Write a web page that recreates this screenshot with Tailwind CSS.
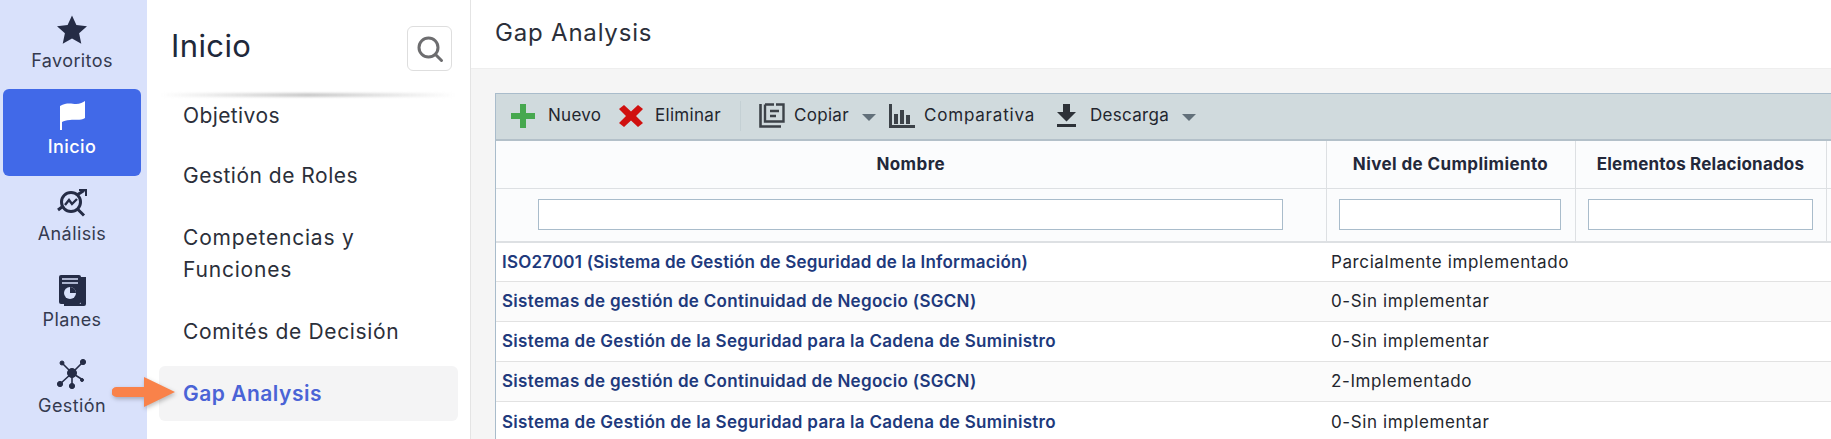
<!DOCTYPE html>
<html lang="es">
  <head>
    <meta charset="UTF-8" />
    <title>Gap Analysis</title>
    <script src="https://cdn.jsdelivr.net/npm/@tailwindcss/browser@4"></script>
  </head>
  <body class="w-[1831px] h-[439px] overflow-hidden bg-white font-['Inter',sans-serif] text-[#2b2f3a]">
    <div class="flex h-[439px]">
      <!-- barra de iconos -->
      <nav class="relative w-[147px] h-full shrink-0 bg-[#d9e1fb] pt-[14px] pr-[3px] flex flex-col items-center text-[18px] tracking-[0.4px] text-[#343a4f]">
        <a class="w-[138px] h-[75px] flex flex-col items-center">
          <svg class="w-[32px] h-[32px]" viewBox="0 0 32 32"><path fill="#252c46" d="M16 1.5l4.4 9.6 10.6 1.2-7.9 7 2.2 10.5L16 24.6 6.700 29.800l2.200-10.500-7.900-7 10.600-1.200z"/></svg>
          <span class="leading-[24px] mt-[3px]">Favoritos</span>
        </a>
        <a class="w-[138px] h-[87px] rounded-[6px] bg-[#4169e8] flex flex-col items-center pt-[11px] text-white font-medium">
          <svg class="w-[25px] h-[30px]" viewBox="0 0 25 30"><path fill="#fff" d="M0 6C7 2 12 4 16 4c4 0 7-2 9-3v17c-5 3-10 1-15 2-4 0-6 1-8 2v8H0z"/></svg>
          <span class="leading-[24px] mt-[5px]">Inicio</span>
        </a>
        <a class="w-[138px] h-[91px] flex flex-col items-center pt-[13px]">
          <svg class="w-[30px] h-[28px]" viewBox="0 0 30 28" fill="none" stroke="#252c46" stroke-width="3"><circle cx="14" cy="13" r="9.500"/><path d="M20.500 20l6.500 6.500M1 21l4-3M20 6l7-4.500"/><path stroke-width="2" d="M22 1h7v6"/><path stroke-width="2.400" d="M8 16l4-5 3 4 5-5"/></svg>
          <span class="leading-[24px] mt-[5px]">Análisis</span>
        </a>
        <a class="w-[138px] h-[92px] flex flex-col items-center pt-[7px]">
          <svg class="w-[30px] h-[32px]" viewBox="0 0 30 32"><path fill="#252c46" d="M24 3h5v27a2 2 0 0 1-2 2H7v-2h17z"/><rect x="2" y="1" width="22" height="29" rx="2" fill="#252c46"/><path stroke="#d9e1fb" stroke-width="1.500" d="M5 5h16M5 9h16"/><circle cx="13" cy="19" r="6" fill="#d9e1fb"/><path fill="#252c46" d="M13 19v-6a6 6 0 0 1 6 6z"/></svg>
          <span class="leading-[24px] mt-[2px]">Planes</span>
        </a>
        <a class="w-[138px] flex flex-col items-center">
          <svg class="w-[30px] h-[30px]" viewBox="0 0 30 30" fill="#252c46" stroke="#252c46"><path stroke-width="1.600" d="M5 4l10 10M26 3L15 14M15 14L3 25M15 14l11 7M15 14v13"/><circle cx="15" cy="14" r="4.500"/><circle cx="5" cy="4" r="2"/><circle cx="26" cy="3" r="2.600"/><circle cx="3" cy="25" r="2.600"/><circle cx="15" cy="27" r="2.600"/><circle cx="25" cy="21" r="1.500"/></svg>
          <span class="leading-[24px] mt-[5px]">Gestión</span>
        </a>
        <!-- flecha de anotación -->
        <svg class="absolute left-[112px] top-[377px] w-[63px] h-[30px] z-10 drop-shadow-[1px_2px_2px_rgba(0,0,0,0.25)]" viewBox="0 0 63 30"><path fill="#f9824a" d="M32 0l31 15-31 15V20H4.500a4.500 4.500 0 0 1 0-10H32z"/></svg>
      </nav>

      <!-- menu lateral -->
      <aside class="w-[324px] h-full shrink-0 bg-white border-r border-[#e4e4e4]">
        <div class="h-[96px] flex items-start justify-between pl-[24px] pr-[18px] pt-[26px] relative">
          <h1 class="text-[31px] tracking-[0.4px] leading-[40px] text-[#20283a]">Inicio</h1>
          <button class="w-[45px] h-[45px] border border-[#dedede] rounded-[6px] flex items-center justify-center">
            <svg class="w-[30px] h-[30px]" viewBox="0 0 30 30" fill="none" stroke="#6d6d6f" stroke-width="3" stroke-linecap="round"><circle cx="13.500" cy="13.500" r="9.500"/><path d="M20.500 20.500l6 6"/></svg>
          </button>
          <div class="absolute left-[13px] right-[14px] bottom-[-1px] h-[4px] bg-gradient-to-r from-transparent via-[#c9c9c9] to-transparent blur-[1px]"></div>
        </div>
        <ul class="text-[21px] text-[#2b2f3a]">
          <li class="pl-[36px] h-[40px] leading-[40px] tracking-[0.4px]">Objetivos</li>
          <li class="pl-[36px] mt-[20px] h-[40px] leading-[40px] tracking-[0.5px]">Gestión de Roles</li>
          <li class="pl-[36px] mt-[26px] h-[64px] leading-[32px] tracking-[0.8px]">Competencias y<br />Funciones</li>
          <li class="pl-[36px] mt-[26px] h-[40px] leading-[40px] tracking-[0.65px]">Comités de Decisión</li>
          <li class="ml-[12px] mt-[14px] w-[299px] h-[55px] rounded-[6px] bg-[#f4f4f5] pl-[24px] flex items-center font-semibold tracking-[0.5px] text-[#4a63d6]">Gap Analysis</li>
        </ul>
      </aside>

      <!-- contenido -->
      <main class="flex-1 min-w-0 h-full bg-[#f5f5f5] overflow-hidden">
        <header class="h-[69px] bg-white flex items-center pb-[2px] pl-[24px] text-[24px] tracking-[0.8px] text-[#2b2f3a] border-b border-[#eeeeee]">Gap Analysis</header>
        <section class="ml-[24px] mt-[24px] w-[1400px] border-l border-t border-[#a9bccb] bg-white">
          <div class="h-[47px] bg-[#d0dadd] border-b-2 border-[#b3c0c9] flex items-center pb-[1px] pl-[15px] text-[17px] tracking-[0.3px] text-[#23262e]">
            <svg class="w-[24px] h-[24px] shrink-0" viewBox="0 0 24 24"><path fill="#47a84f" d="M9 0h6v9h9v6h-9v9H9v-9H0V9h9z"/></svg>
            <span class="ml-[13px] w-[71px] shrink-0">Nuevo</span>
            <svg class="w-[24px] h-[22px] shrink-0" viewBox="0 0 24 22"><path fill="#d0100f" d="M5 0l7 6.500L19 0l5 4-7 7 7 7-5 4-7-6.500L5 22l-5-4 7-7-7-7z"/></svg>
            <span class="ml-[12px] w-[85px] shrink-0">Eliminar</span>
            <div class="w-px h-[30px] bg-[#c4d0d4] shrink-0"></div>
            <svg class="w-[26px] h-[26px] ml-[18px] shrink-0" viewBox="0 0 26 26" fill="none" stroke="#3c4248" stroke-width="2.400"><path stroke-width="2.600" d="M1.500 1v22.500H22"/><path d="M6 1.500v17h18.500V1.500H17"/><path d="M6 1.500h9M11 8h9M11 13h6"/></svg>
            <span class="ml-[9px] w-[68px] shrink-0">Copiar</span>
            <span class="w-0 h-0 shrink-0 border-x-[7px] border-x-transparent border-t-[7px] border-t-[#62707a] mt-[2px]"></span>
            <svg class="w-[26px] h-[24px] ml-[13px] shrink-0" viewBox="0 0 26 24" fill="#3c4248"><path d="M0 0h3v21h23v3H0z"/><path d="M5 10h4v10H5zM11 6h4v14h-4zM17 11h4v9h-4z"/></svg>
            <span class="ml-[9px] w-[132px] shrink-0 tracking-[0.8px]">Comparativa</span>
            <svg class="w-[21px] h-[24px] shrink-0" viewBox="0 0 21 24" fill="#2d3238"><path d="M7 0h7v8h6l-9.500 9.500L1 8h6zM1 20h19v3H1z"/></svg>
            <span class="ml-[13px] w-[92px] shrink-0">Descarga</span>
            <span class="w-0 h-0 shrink-0 border-x-[7px] border-x-transparent border-t-[7px] border-t-[#62707a] mt-[2px]"></span>
          </div>
          <table class="table-fixed w-full border-collapse text-[17px]">
            <colgroup>
              <col class="w-[830px]" />
              <col class="w-[249px]" />
              <col class="w-[251px]" />
              <col />
            </colgroup>
            <thead class="bg-[#fbfcfd] text-[#23283a] tracking-[0.4px]">
              <tr class="h-[47px] border-b border-[#dde0e3] font-bold">
                <th class="border-r border-[#dde0e3]">Nombre</th>
                <th class="border-r border-[#dde0e3]">Nivel de Cumplimiento</th>
                <th class="border-r border-[#dde0e3] tracking-[0.2px]">Elementos Relacionados</th>
                <th></th>
              </tr>
              <tr class="h-[54px] border-b-2 border-[#dde0e3]">
                <td class="border-r border-[#dde0e3] pl-[42px] pr-[43px]"><input class="w-full h-[31px] bg-white border border-[#a9bccb] block" /></td>
                <td class="border-r border-[#dde0e3] pl-[12px] pr-[14px]"><input class="w-full h-[31px] bg-white border border-[#a9bccb] block" /></td>
                <td class="border-r border-[#dde0e3] pl-[12px] pr-[13px]"><input class="w-full h-[31px] bg-white border border-[#a9bccb] block" /></td>
                <td></td>
              </tr>
            </thead>
            <tbody class="text-[#23262e] [&_td]:pt-[2px]">
              <tr class="h-[39px] border-b border-[#e2e2e2] bg-white">
                <td class="pl-[6px] font-semibold tracking-[0.2px] text-[#20397c]">ISO27001 (Sistema de Gestión de Seguridad de la Información)</td>
                <td class="pl-[5px] tracking-[0.6px]">Parcialmente implementado</td><td></td><td></td>
              </tr>
              <tr class="h-[40px] border-b border-[#e2e2e2] bg-[#fbfbfb]">
                <td class="pl-[6px] font-semibold tracking-[0.3px] text-[#20397c]">Sistemas de gestión de Continuidad de Negocio (SGCN)</td>
                <td class="pl-[5px] tracking-[0.6px]">0-Sin implementar</td><td></td><td></td>
              </tr>
              <tr class="h-[40px] border-b border-[#e2e2e2] bg-white">
                <td class="pl-[6px] font-semibold tracking-[0.3px] text-[#20397c]">Sistema de Gestión de la Seguridad para la Cadena de Suministro</td>
                <td class="pl-[5px] tracking-[0.6px]">0-Sin implementar</td><td></td><td></td>
              </tr>
              <tr class="h-[40px] border-b border-[#e2e2e2] bg-[#fbfbfb]">
                <td class="pl-[6px] font-semibold tracking-[0.3px] text-[#20397c]">Sistemas de gestión de Continuidad de Negocio (SGCN)</td>
                <td class="pl-[5px] tracking-[0.6px]">2-Implementado</td><td></td><td></td>
              </tr>
              <tr class="h-[40px] bg-white">
                <td class="pl-[6px] font-semibold tracking-[0.3px] text-[#20397c]">Sistema de Gestión de la Seguridad para la Cadena de Suministro</td>
                <td class="pl-[5px] tracking-[0.6px]">0-Sin implementar</td><td></td><td></td>
              </tr>
            </tbody>
          </table>
        </section>
      </main>
    </div>
  </body>
</html>
